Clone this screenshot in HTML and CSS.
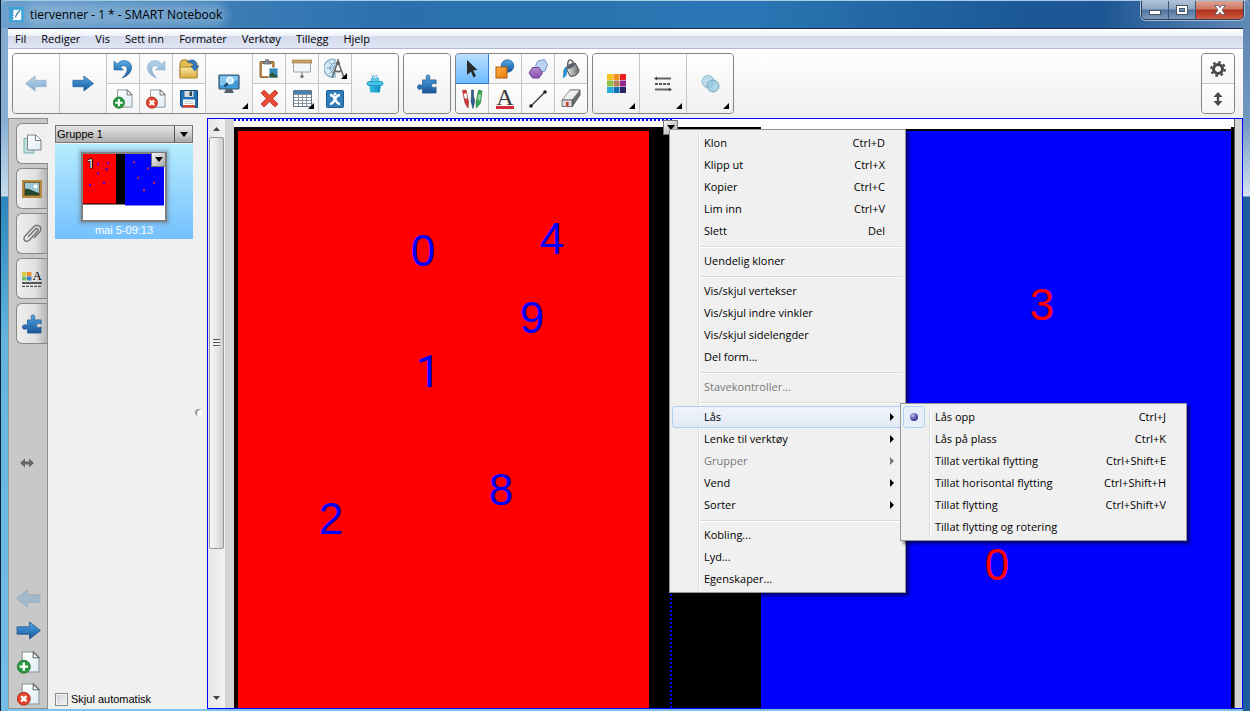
FILE: index.html
```html
<!DOCTYPE html>
<html lang="no">
<head>
<meta charset="utf-8">
<title>tiervenner - 1 * - SMART Notebook</title>
<link rel="stylesheet" href="styles.css">
</head>
<body>
<svg class="defs" aria-hidden="true">
  <defs>
    <linearGradient id="gBlue" x1="0" y1="0" x2="0" y2="1"><stop offset="0" stop-color="#5fa9e0"/><stop offset=".5" stop-color="#2f7fc2"/><stop offset="1" stop-color="#1c5596"/></linearGradient>
    <linearGradient id="gPale" x1="0" y1="0" x2="0" y2="1"><stop offset="0" stop-color="#b4d2ec"/><stop offset="1" stop-color="#86abce"/></linearGradient>
    <linearGradient id="gPage" x1="0" y1="0" x2="1" y2="1"><stop offset="0" stop-color="#fff"/><stop offset="1" stop-color="#dcecf5"/></linearGradient>
    <linearGradient id="gOrange" x1="0" y1="0" x2="1" y2="1"><stop offset="0" stop-color="#ffb13c"/><stop offset="1" stop-color="#ea7a10"/></linearGradient>
    <linearGradient id="gFolder" x1="0" y1="0" x2="0" y2="1"><stop offset="0" stop-color="#fbe9a6"/><stop offset="1" stop-color="#d9ab3e"/></linearGradient>
    <linearGradient id="gCyan" x1="0" y1="0" x2="1" y2="0"><stop offset="0" stop-color="#3cc0e8"/><stop offset="1" stop-color="#0d8dbf"/></linearGradient>
    <linearGradient id="gPurple" x1="0" y1="0" x2="0" y2="1"><stop offset="0" stop-color="#b58bd4"/><stop offset="1" stop-color="#8550ad"/></linearGradient>
    <linearGradient id="gMetal" x1="0" y1="0" x2="1" y2="0"><stop offset="0" stop-color="#f4f4f4"/><stop offset="1" stop-color="#6a6a6a"/></linearGradient>
  </defs>
  <symbol id="arrow" viewBox="0 0 24 18"><path d="M1 5.500h12V.8L23.500 9 13 17.200v-4.700H1z" stroke-width=".8"/></symbol>
  <symbol id="page" viewBox="0 0 22 22"><path d="M5 1h11l5 5v14H5z" fill="url(#gPage)" stroke="#8b9196"/><path d="M15.500 1v5.500H21z" fill="#fff" stroke="#5f666c"/></symbol>
  <symbol id="pageAdd" viewBox="0 0 22 22"><use href="#page"/><circle cx="6.500" cy="15" r="6.200" fill="#279a3f" stroke="#1a6e2c" stroke-width=".8"/><path d="M6.500 11v8M2.500 15h8" stroke="#fff" stroke-width="2.200"/></symbol>
  <symbol id="pageDel" viewBox="0 0 22 22"><use href="#page"/><circle cx="6.500" cy="15" r="6.200" fill="#e2432c" stroke="#a32718" stroke-width=".8"/><path d="M4 12.500l5 5m0-5l-5 5" stroke="#fff" stroke-width="2.400"/></symbol>
  <symbol id="puzzle" viewBox="0 0 22 22"><path d="M6 6.500h5C9.300 3.500 9.800 1 12 1s2.900 2.500 1.300 5.500H21V11c-2.500-1.600-5-.8-5 1.600s2.500 3.200 5 1.600V21H6v-5c-3 1.600-5.500 1-5.500-1.600S3 11.200 6 12.600z" fill="url(#gBlue)" stroke="#22578f" stroke-width=".8"/></symbol>
  <symbol id="undoArrow" viewBox="0 0 20 20"><path d="M1 2v9h9.500L7.600 8.200C12 3.500 19 10 9 19c13-4 12-17.500 2-17.500-3 0-5 1.500-6.500 3.500z"/></symbol>
  <symbol id="corner" viewBox="0 0 6 6"><path d="M6 0v6H0z"/></symbol>
  <symbol id="down" viewBox="0 0 8 5"><path d="M0 0h8L4 5z"/></symbol>
  <symbol id="right" viewBox="0 0 4 8"><path d="M0 0l4 4-4 4z"/></symbol>
</svg>

<div class="window">
  <header class="titlebar">
    <svg class="app-icon" viewBox="0 0 16 16"><rect width="16" height="16" rx="1" fill="#3ba2d8"/><path d="M4 3h9v11H4z" fill="#fff"/><path d="M3 4h2M3 6.500h2M3 9h2M3 11.500h2" stroke="#1677b4"/><path d="M7 11l1-3 4-5" stroke="#2a7ab0" stroke-width="1.300" fill="none"/></svg>
    <h1 class="title">tiervenner - 1 * - SMART Notebook</h1>
    <div class="controls">
      <button class="ctl" aria-label="Minimer"><svg viewBox="0 0 12 10" width="12" height="10"><rect x=".5" y="5.500" width="11" height="4" fill="#fff" stroke="#465466"/></svg></button>
      <button class="ctl" aria-label="Maksimer"><svg viewBox="0 0 12 10" width="12" height="10"><rect x=".5" y=".5" width="11" height="9" fill="#fff" stroke="#465466"/><rect x="3.500" y="3.500" width="5" height="3" fill="#7690ae" stroke="#465466"/></svg></button>
      <button class="ctl close" aria-label="Lukk"><svg viewBox="0 0 12 10" width="12" height="10"><path d="M.8.500h3.500L6 2.700 7.700.500h3.500L8 5l3.200 4.500H7.700L6 7.300 4.300 9.500H.8L4 5z" fill="#fff" stroke="#555b68" stroke-width=".8"/></svg></button>
    </div>
  </header>

  <div class="client">
    <nav class="menubar">
      <button>Fil</button><button>Rediger</button><button>Vis</button><button>Sett inn</button><button>Formater</button><button>Verktøy</button><button>Tillegg</button><button>Hjelp</button>
    </nav>

    <div class="toolbar">
      <div class="group main-group">
        <button class="tool tall" aria-label="Forrige side"><svg class="flip" width="22" height="17" viewBox="0 0 24 18"><use href="#arrow" fill="url(#gPale)" stroke="#8db0d0"/></svg></button>
        <button class="tool tall" aria-label="Neste side"><svg width="22" height="17" viewBox="0 0 24 18"><use href="#arrow" fill="url(#gBlue)" stroke="#23609e"/></svg></button>
        <button class="tool" aria-label="Angre"><svg width="20" height="20" viewBox="0 0 20 20"><use href="#undoArrow" fill="url(#gBlue)" stroke="#235f9c" stroke-width=".6"/></svg></button>
        <button class="tool" aria-label="Gjør om"><svg class="flip" width="20" height="20" viewBox="0 0 20 20"><use href="#undoArrow" fill="url(#gPale)" stroke="#90b4d2" stroke-width=".6"/></svg></button>
        <button class="tool" aria-label="Åpne fil"><svg width="21" height="20" viewBox="0 0 21 20"><path d="M1 4l2-3h5l2 3h8v14H1z" fill="#e4bd55" stroke="#9b7927"/><path d="M1 8h17v11H1z" fill="url(#gFolder)" stroke="#a98530"/><path d="M8 3c5-4 10-2 9.500 4H20l-4.200 5L12 7h2.500c0-3-3-4-6.500-4z" fill="#2f7fc2" stroke="#1c5596" stroke-width=".7"/></svg></button>
        <button class="tool tall" aria-label="Vis skjermer"><svg width="22" height="20" viewBox="0 0 22 20"><rect x="1" y="1" width="20" height="14" rx="1" fill="#3f9ad6" stroke="#3a5266" stroke-width="1.200"/><path d="M2 2h18v4L2 12z" fill="#7fc3ee"/><path d="M8 15h6l2 4H6z" fill="#56616b"/><circle cx="12" cy="6.500" r="3.200" fill="#c9e9fb" stroke="#fff" stroke-width="1.300"/><path d="M9.700 9l-3 3.500" stroke="#1d3f5e" stroke-width="2"/></svg><svg class="more" width="6" height="6"><use href="#corner"/></svg></button>
        <button class="tool" aria-label="Lim inn"><svg width="20" height="20" viewBox="0 0 20 20"><rect x="1" y="2.500" width="14" height="16" rx="1" fill="#b98d50" stroke="#866333"/><path d="M3 5h10v12H3z" fill="#fff"/><path d="M4.500 5V2.500h2V.8h3.200v1.700h2V5z" fill="#8b8f93" stroke="#55595d" stroke-width=".7"/><rect x="10" y="9" width="9" height="10" fill="#2f87b6" stroke="#eef3f5"/><path d="M10.500 18.500v-3l3-2 5 4v1z" fill="#2f5534"/></svg></button>
        <button class="tool" aria-label="Skjermskygge"><svg width="20" height="20" viewBox="0 0 20 20"><path d="M1.500 3h17v10h-17z" fill="#f1f5f8" stroke="#a1a6aa"/><path d="M0 1h20v3H0z" fill="#caa566" stroke="#8d6c35" stroke-width=".6"/><path d="M10 13v4" stroke="#777"/><circle cx="10" cy="17.500" r="1.700" fill="#777"/></svg></button>
        <button class="tool" aria-label="Måleverktøy"><svg width="22" height="21" viewBox="0 0 22 21"><path d="M11 1.500a9 9 0 1 0 0 17.500z" fill="#d8eaf4" stroke="#7aa9c7" stroke-width="1.200"/><path d="M11 5a5 5 0 0 0 0 10M2.500 10H11M5 4l5 5M5 16l5-5" fill="none" stroke="#6fa1c0"/><path d="M14 1v3M13.500 5L8 19.500M14.500 5l5.500 14.500M10.500 12.500c2.500 1.500 5 1.500 7.500 0" fill="none" stroke="#6a6a6a" stroke-width="1.600"/><circle cx="14" cy="5" r="1.900" fill="#5e5e5e"/></svg><svg class="more" width="6" height="6"><use href="#corner"/></svg></button>
        <button class="tool tall" aria-label="Tillegg"><svg width="18" height="20" viewBox="0 0 18 20"><path d="M3 10h12l-1.200 8.500H4.200z" fill="url(#gCyan)"/><rect x="1" y="7.500" width="16" height="4" rx="2" fill="#45c3e5" stroke="#168bb6" stroke-width=".8"/><path d="M5 7.500l1-4 3 1.500 3-1.500 1 4z" fill="#65cfec" stroke="#1b96c0" stroke-width=".7"/><path d="M8 .5v3M5.500 1.500L7 3M11 1L9.500 3" stroke="#47aecd"/></svg></button>
        <button class="tool" aria-label="Legg til side"><svg width="20" height="20"><use href="#pageAdd"/></svg></button>
        <button class="tool" aria-label="Slett side"><svg width="20" height="20"><use href="#pageDel"/></svg></button>
        <button class="tool" aria-label="Lagre"><svg width="18" height="18" viewBox="0 0 18 18"><path d="M.5.500h17v17h-15l-2-2z" fill="#2371b5" stroke="#164a7c"/><path d="M4.500 1h9v6h-9z" fill="#d6dde2"/><path d="M9.500 1.500h2.500v4.500H9.500z" fill="#34434e"/><path d="M3 9.500h12v8H3z" fill="#fff"/><path d="M3 15h12v2.500H3z" fill="#d9432e"/><path d="M4.500 11.500h9M4.500 13.500h9" stroke="#b4bcc2" stroke-width=".8"/></svg></button>
        <button class="tool" aria-label="Slett"><svg width="19" height="19" viewBox="0 0 19 19"><path d="M1 4l3-3 5.500 5.300L15 1l3 3-5.400 5.500L18 15l-3 3-5.500-5.300L4 18l-3-3 5.400-5.500z" fill="#ea4e38" stroke="#b52e1e" stroke-width=".8"/></svg></button>
        <button class="tool" aria-label="Tabell"><svg width="19" height="17" viewBox="0 0 19 17"><path d="M.5.500h18v16H.5z" fill="#fff" stroke="#667684"/><path d="M1 1h17v3H1z" fill="#4582b4"/><path d="M1 4.500h17M1 7.500h17M1 10.500h17M1 13.500h17M5.500 4v12M9.500 4v12M13.500 4v12" stroke="#8b98a2"/></svg><svg class="more" width="6" height="6"><use href="#corner"/></svg></button>
        <button class="tool" aria-label="SMART Exchange"><svg width="18" height="18" viewBox="0 0 18 18"><rect x=".5" y=".5" width="17" height="17" rx="1" fill="#2f7dbb" stroke="#1b5b93"/><path d="M4 5c3 0 4 2 5 4s2 5 5 5M14 5c-3 0-4 2-5 4s-2 5-5 5" stroke="#fff" stroke-width="2.400" fill="none"/><circle cx="9" cy="4" r="1.500" fill="#fff"/></svg></button>
      </div>
      <div class="group">
        <button class="tool tall" aria-label="Tilleggsverktøy"><svg width="20" height="20"><use href="#puzzle"/></svg></button>
      </div>
      <div class="group draw-group">
        <button class="tool active" aria-label="Merk"><svg width="12" height="18" viewBox="0 0 12 18"><path d="M1 0l10.500 10-4.300.500L10 16l-2.500 1.500L5 11.700l-4 3z" fill="#2b2b2b"/></svg></button>
        <button class="tool" aria-label="Former"><svg width="20" height="20" viewBox="0 0 20 20"><circle cx="12.500" cy="7" r="6.300" fill="url(#gBlue)" stroke="#2a65a0" stroke-width=".8"/><rect x="1" y="8" width="11" height="11" fill="url(#gOrange)" stroke="#a85c14"/></svg></button>
        <button class="tool" aria-label="Vanlige polygoner"><svg width="20" height="20" viewBox="0 0 20 20"><path d="M7.500 7l2.500-5 6.500-1.500 3 5-2.500 6.500-6 1z" fill="#bcd4f4" stroke="#7c96c8"/><path d="M4.500 8.500h6.500L14.500 14 11 19H4.500L1 14z" fill="url(#gPurple)" stroke="#6e4394"/></svg></button>
        <button class="tool" aria-label="Fyll"><svg width="18" height="20" viewBox="0 0 18 20"><path d="M6 8C5 3 7 0 9 1s3 3 2 7" fill="none" stroke="#444" stroke-width="1.200"/><path d="M4 9l9-5 4 7c-1 5-5 7-9 6z" fill="url(#gMetal)" stroke="#444"/><ellipse cx="8.500" cy="7" rx="5.500" ry="2.200" transform="rotate(-28 8.500 7)" fill="#5b6268"/><path d="M3.500 8c-4 4-1 6-3 11 4-1 5-4 4.500-9z" fill="#2e8fd0"/></svg></button>
        <button class="tool" aria-label="Penner"><svg width="21" height="20" viewBox="0 0 21 20"><path d="M.5 1.500l3.500-.5 2.500 12-.5 6-3-5z" fill="#d33a3a" stroke="#8e2222" stroke-width=".6"/><path d="M1.500 5l3-1 1 5-2.500 1z" fill="#f4f0ef"/><path d="M9.500 1h2v6l1.200 5-1.700 7.500L9 12l.5-5z" fill="#315f8e" stroke="#1d3e60" stroke-width=".6"/><path d="M16.500 1l3.500 1-1.500 12-4 5-.5-5z" fill="#36a852" stroke="#1b7434" stroke-width=".6"/><path d="M16.500 5l2.500.5-.8 6-2.700-.5z" fill="#8fd6a3"/></svg></button>
        <button class="tool" aria-label="Tekst"><span class="letter">A</span></button>
        <button class="tool" aria-label="Linjer"><svg width="18" height="18" viewBox="0 0 18 18"><path d="M2 16L16 2" stroke="#333" stroke-width="1.200"/><circle cx="2" cy="16" r="1.800" fill="#222"/><circle cx="16" cy="2" r="1.800" fill="#222"/></svg></button>
        <button class="tool" aria-label="Viskelær"><svg width="20" height="19" viewBox="0 0 20 19"><path d="M9 1h10v5l-8 12V11z" fill="#6c6c6c" stroke="#444" stroke-width=".8"/><path d="M9 1h10l-8 10H1z" fill="#efefef" stroke="#777" stroke-width=".8"/><path d="M1 11h10v6.500H1z" fill="#ddd" stroke="#555" stroke-width=".8"/><path d="M5 13h2.500v4H5z" fill="#d43b2d"/></svg></button>
      </div>
      <div class="group">
        <button class="tool tall" aria-label="Farge"><svg width="19" height="19" viewBox="0 0 19 19"><path fill="#f6c321" d="M0 0h6v6H0z"/><path fill="#f5921e" d="M6.500 0h6v6h-6z"/><path fill="#ec2024" d="M13 0h6v6h-6z"/><path fill="#8cc044" d="M0 6.500h6v6H0z"/><path fill="#b38154" d="M6.500 6.500h6v6h-6z"/><path fill="#91288e" d="M13 6.500h6v6h-6z"/><path fill="#29abe1" d="M0 13h6v6H0z"/><path fill="#0a72bb" d="M6.500 13h6v6h-6z"/><path fill="#292563" d="M13 13h6v6h-6z"/></svg><svg class="more" width="6" height="6"><use href="#corner"/></svg></button>
        <button class="tool tall" aria-label="Linjestil"><svg width="18" height="16" viewBox="0 0 18 16"><path d="M2 2.500h15M1 13.500h15" stroke="#666" stroke-width="2"/><path d="M0 2.500L3 .5v4zM18 13.500l-3-2v4z" fill="#444"/><path d="M1 8h16" stroke="#555" stroke-width="2" stroke-dasharray="3 1"/></svg><svg class="more" width="6" height="6"><use href="#corner"/></svg></button>
        <button class="tool tall" aria-label="Gjennomsiktighet"><svg width="19" height="18" viewBox="0 0 19 18"><circle cx="7" cy="6.500" r="6" fill="#a9d4e8" fill-opacity=".75" stroke="#8ab6ca"/><circle cx="12" cy="11" r="6" fill="#8cc5e0" fill-opacity=".7" stroke="#77a9c0"/></svg><svg class="more" width="6" height="6"><use href="#corner"/></svg></button>
      </div>
      <div class="group settings-group">
        <button class="tool" aria-label="Innstillinger"><svg width="16" height="16" viewBox="0 0 16 16"><circle cx="8" cy="8" r="4.500" fill="none" stroke="#484848" stroke-width="3"/><circle cx="8" cy="8" r="6.800" fill="none" stroke="#484848" stroke-width="2.200" stroke-dasharray="2.600 2.740"/></svg></button>
        <button class="tool" aria-label="Flytt verktøylinje"><svg width="10" height="14" viewBox="0 0 10 14"><path d="M5 0l4.500 5H6.200v4h3.300L5 14 .5 9h3.300V5H.5z" fill="#484848"/></svg></button>
      </div>
    </div>

    <div class="body">
      <aside class="tabs">
        <button class="tab current" aria-label="Sidesorterer"><svg width="20" height="20" viewBox="0 0 20 20"><path d="M1 4.500h10V19H1z" fill="#c2e2e2" stroke="#74acae"/><path d="M4.500 1H13l5 5v10H4.500z" fill="url(#gPage)" stroke="#788388"/><path d="M12.500 1v5.500H18" fill="#fff" stroke="#788388"/></svg></button>
        <button class="tab" aria-label="Galleri"><svg width="20" height="18" viewBox="0 0 20 18"><rect x="1" y="1" width="18" height="16" fill="#9cc9d8" stroke="#b48a3e" stroke-width="2"/><rect x="2.500" y="2.500" width="15" height="13" fill="none" stroke="#7c6230"/><path d="M3 9c4-1 7 2 14 4v2H3z" fill="#23472f"/><circle cx="13.500" cy="6.500" r="2" fill="#fff"/></svg></button>
        <button class="tab" aria-label="Vedlegg"><svg width="20" height="20" viewBox="0 0 20 20"><path d="M6 13l7-7.500c2-2 4 0 2.300 2L8 15.500c-4 4-8 0-5-3.500l8.500-9c4-4 9.500 0 6.500 4.500L12 14" fill="none" stroke="#777" stroke-width="1.500"/></svg></button>
        <button class="tab" aria-label="Egenskaper"><span class="props"><svg width="20" height="16" viewBox="0 0 20 16"><path fill="#d8cb45" d="M0 1h4.500v4H0z"/><path fill="#ee8b2c" d="M5 1h4.500v4H5z"/><path fill="#77bd63" d="M0 5.500h4.500v4H0z"/><path fill="#3f7bc0" d="M5 5.500h4.500v4H5z"/><path d="M0 12h20" stroke="#333" stroke-width="1.600"/><path d="M0 15.300h20" stroke="#333" stroke-dasharray="3 1"/></svg><span class="small-letter">A</span></span></button>
        <button class="tab" aria-label="Tillegg"><svg width="20" height="20"><use href="#puzzle"/></svg></button>
        <div class="side-tools">
          <button class="side" aria-label="Flytt sidefelt"><svg class="resize" width="14" height="10" viewBox="0 0 14 10"><path d="M0 5l5-4.500v3h4v-3L14 5 9 9.500v-3H5v3z" fill="#666"/></svg></button>
          <button class="side" aria-label="Forrige side"><svg class="flip" width="25" height="19"><use href="#arrow" fill="#a3b8c9" stroke="#92aabd"/></svg></button>
          <button class="side" aria-label="Neste side"><svg width="25" height="19"><use href="#arrow" fill="url(#gBlue)" stroke="#24598f"/></svg></button>
          <button class="side" aria-label="Legg til side"><svg width="23" height="23"><use href="#pageAdd"/></svg></button>
          <button class="side" aria-label="Slett side"><svg width="23" height="23"><use href="#pageDel"/></svg></button>
        </div>
      </aside>

      <section class="sorter">
        <div class="group-select">
          <select aria-label="Gruppe"><option>Gruppe 1</option></select>
          <span class="drop"><svg width="8" height="5"><use href="#down"/></svg></span>
        </div>
        <div class="page-item">
          <div class="thumb">
            <svg viewBox="0 0 82 64" width="82" height="66" preserveAspectRatio="none"><path fill="#fff" d="M0 0h82v64H0z"/><path d="M0 0h42v49H0z"/><path fill="#f00" d="M0 0h33v48H0z"/><path fill="#00f" d="M42 0h39v50H42z"/><path d="M14 9h2v2h-2zM24 8h2v2h-2zM22 14h3v2h-3zM14 18h2v2h-2zM20 27h2v2h-2zM6 29h2v2H6z" fill="#50c"/><path d="M50 7h2v2h-2zM64 13h2v2h-2zM54 22h2v2h-2zM70 27h2v2h-2zM60 34h2v2h-2z" fill="#c0205a"/></svg>
            <span class="thumb-no">1</span>
            <button class="handle thumb-handle" aria-label="Sidemeny"><svg width="8" height="5"><use href="#down"/></svg></button>
          </div>
          <span class="stamp">mai 5-09:13</span>
        </div>
        <span class="grip"></span>
        <label class="autohide"><input type="checkbox">Skjul automatisk</label>
      </section>

      <main class="workspace">
        <div class="scrollbar">
          <svg width="7" height="4" viewBox="0 0 7 4"><path d="M0 4h7L3.500 0z" fill="#444"/></svg>
          <div class="track"><div class="thumbbar"><span class="lines"></span></div></div>
          <svg width="7" height="4" viewBox="0 0 7 4"><path d="M0 0h7L3.500 4z" fill="#444"/></svg>
        </div>
        <div class="stage">
          <div class="board">
            <div class="red"></div>
            <div class="gap"></div>
            <div class="blue"></div>
          </div>
          <div class="selection"></div>
          <span class="num n0">0</span><span class="num n4">4</span><span class="num n9">9</span><span class="num n1">1</span><span class="num n8">8</span><span class="num n2">2</span>
          <span class="num warm n3">3</span><span class="num warm n00">0</span>
          <button class="handle object-handle" aria-label="Objektmeny"><svg width="8" height="5"><use href="#down"/></svg></button>

          <div class="menu context" role="menu">
            <button class="item"><span>Klon</span><span>Ctrl+D</span></button>
            <button class="item"><span>Klipp ut</span><span>Ctrl+X</span></button>
            <button class="item"><span>Kopier</span><span>Ctrl+C</span></button>
            <button class="item"><span>Lim inn</span><span>Ctrl+V</span></button>
            <button class="item"><span>Slett</span><span>Del</span></button>
            <div class="sep"></div>
            <button class="item">Uendelig kloner</button>
            <div class="sep"></div>
            <button class="item">Vis/skjul vertekser</button>
            <button class="item">Vis/skjul indre vinkler</button>
            <button class="item">Vis/skjul sidelengder</button>
            <button class="item">Del form...</button>
            <div class="sep"></div>
            <button class="item" disabled>Stavekontroller...</button>
            <div class="sep"></div>
            <button class="item sub hot"><span>Lås</span><svg width="4" height="8"><use href="#right"/></svg></button>
            <button class="item sub"><span>Lenke til verktøy</span><svg width="4" height="8"><use href="#right"/></svg></button>
            <button class="item sub" disabled><span>Grupper</span><svg width="4" height="8"><use href="#right"/></svg></button>
            <button class="item sub"><span>Vend</span><svg width="4" height="8"><use href="#right"/></svg></button>
            <button class="item sub"><span>Sorter</span><svg width="4" height="8"><use href="#right"/></svg></button>
            <div class="sep"></div>
            <button class="item">Kobling...</button>
            <button class="item">Lyd...</button>
            <button class="item">Egenskaper...</button>
          </div>

          <div class="menu submenu" role="menu">
            <span class="mark"><span class="dot"></span></span>
            <button class="item"><span>Lås opp</span><span>Ctrl+J</span></button>
            <button class="item"><span>Lås på plass</span><span>Ctrl+K</span></button>
            <button class="item"><span>Tillat vertikal flytting</span><span>Ctrl+Shift+E</span></button>
            <button class="item"><span>Tillat horisontal flytting</span><span>Ctrl+Shift+H</span></button>
            <button class="item"><span>Tillat flytting</span><span>Ctrl+Shift+V</span></button>
            <button class="item">Tillat flytting og rotering</button>
          </div>
        </div>
      </main>
    </div>
  </div>
</div>
</body>
</html>
```

FILE: styles.css
```css
* { box-sizing: border-box; }

body {
  margin: 0;
  font-family: "Open Sans", "Noto Sans", sans-serif;
  font-size: 11px;
  line-height: 16px;
  color: #000;
}

button {
  margin: 0;
  padding: 0;
  border: 0;
  background: none;
  font: inherit;
  color: inherit;
}

svg { display: block; }
.defs { position: absolute; width: 0; height: 0; }
.flip { transform: scaleX(-1); }

/* Window frame */
.window {
  display: flex;
  flex-direction: column;
  height: 100vh;
  padding: 0 7px 2px 7px;
  overflow: hidden;
  border-left: 1px solid #0b2038;
  background:
    linear-gradient(#84abd0 0, #86aed4 120px, #c5dcee 196px, #2b86bc 197px, #63b5de 340px, #74bde6 100%) left / 7px 100% no-repeat,
    linear-gradient(#5d84b0 0, #6f97c0 120px, #d3e2ef 196px, #1f5c9c 197px, #1f5c9c 100%) right / 7px 100% no-repeat,
    #7cc4ee;
}

.titlebar {
  display: flex;
  align-items: center;
  gap: 6px;
  flex: none;
  height: 28px;
  margin: 0 -7px;
  padding: 0 6px 0 8px;
  border-top: 1px solid #a9cbe6;
  border-radius: 6px 6px 0 0;
  background: linear-gradient(90deg, #6da0cc 0, #3b7cb6 240px, #2a70ae 400px, #2a76b4 60%, #1c5896 82%, #1d5694 88%, #5f88b4 100%);
}

.app-icon { width: 15px; height: 15px; }

.title {
  margin: 0;
  font-size: 12px;
  font-weight: 400;
  line-height: 14px;
  border-radius: 7px;
  background: rgba(170, 202, 228, .4);
  box-shadow: 0 0 8px 5px rgba(170, 202, 228, .4);
}

.controls {
  display: flex;
  align-self: flex-start;
  margin-left: auto;
  border: 1px solid #2b3f5a;
  border-top: 0;
  border-radius: 0 0 5px 5px;
  box-shadow: 0 0 0 1px #a9bfd6;
  overflow: hidden;
}

.ctl {
  display: grid;
  place-items: center;
  width: 27px;
  height: 18px;
  border-right: 1px solid #3c5574;
  background: linear-gradient(#b0c3d8 0, #8ba5c3 45%, #4f729c 50%, #7c9bbd 100%);
}

.close {
  width: 47px;
  border-right: 0;
  background: linear-gradient(#dea394 0, #cd7562 45%, #ae2f1a 50%, #cf5a42 100%);
}

.client {
  display: flex;
  flex-direction: column;
  flex: 1;
  min-height: 0;
  border-top: 1px solid #1b2c44;
  background: #f0f0f0;
}

.menubar {
  display: flex;
  gap: 15px;
  flex: none;
  height: 20px;
  padding-left: 7px;
  border-bottom: 1px solid #b4b9d0;
  background: linear-gradient(#fff 0, #eef1f8 35%, #d4daec 40%, #e1e6f5 100%);
}

/* Toolbar */
.toolbar {
  display: flex;
  align-items: flex-start;
  gap: 4px;
  flex: none;
  height: 69px;
  padding: 4px 8px 0 4px;
  background: linear-gradient(#fff, #efefef);
}

.group {
  display: grid;
  grid-auto-flow: column;
  grid-template-rows: 29px 29px;
  gap: 1px;
  border: 1px solid #848484;
  border-radius: 4px;
  overflow: hidden;
  background: #c6c6c6;
}

.main-group {
  grid-auto-flow: row;
  grid-template-columns: 46px 46px 32px 32px 32px 46px 32px 32px 32px 46px;
}

.draw-group { grid-auto-flow: row; grid-template-columns: repeat(4, 32px); }
.settings-group { margin-left: auto; grid-template-columns: 32px; }

.tool {
  position: relative;
  display: grid;
  place-items: center;
  width: 32px;
  background: linear-gradient(#fdfdfd, #f5f5f5);
}

.tall { grid-row: span 2; width: 46px; background: linear-gradient(#fefefe, #f0f0f0); }
.active { background: linear-gradient(#b9e0ff, #6fbbff); box-shadow: 0 0 0 1px #2f7fd6; z-index: 1; }
.more { position: absolute; right: 4px; bottom: 4px; }

.letter {
  font-family: "Liberation Serif", serif;
  font-size: 24px;
  line-height: 18px;
  color: #3a3a3a;
  border-bottom: 3px solid #d8283c;
}

/* Body */
.body { display: flex; flex: 1; min-height: 0; }

.tabs {
  display: flex;
  flex-direction: column;
  align-items: flex-end;
  gap: 4px;
  flex: none;
  width: 40px;
  padding: 4px 0 2px;
  border: 1px solid #8e8e8e;
  border-left-color: #999;
  background: #c8c8c8;
}

.tab {
  display: grid;
  place-items: center;
  flex: none;
  width: 31px;
  height: 41px;
  border: 1px solid #888;
  border-right: 0;
  border-radius: 6px 0 0 6px;
  background: linear-gradient(90deg, #eee 0, #e2e2e2 60%, #b5b5b5 100%);
}

.current { width: 32px; margin-right: -1px; background: #f0f0f0; }

.props { position: relative; }
.small-letter {
  position: absolute;
  right: 0;
  top: -3px;
  font-family: "Liberation Serif", serif;
  font-size: 13px;
}

.side-tools {
  display: grid;
  gap: 8px;
  justify-items: center;
  width: 38px;
  margin-top: auto;
}

.side { display: grid; place-items: center; height: 24px; }
.resize { margin-right: 2px; }
.side:first-child { margin-bottom: 103px; }

.sorter {
  position: relative;
  display: flex;
  flex-direction: column;
  flex: none;
  width: 159px;
  padding: 7px 14px 2px 7px;
  font-family: "Liberation Sans", Arial, sans-serif;
  background: #f0f0f0;
}

.group-select {
  display: flex;
  flex: none;
  height: 18px;
  border: 1px solid #777;
}

.group-select select {
  flex: 1;
  min-width: 0;
  padding: 0 1px;
  border: 0;
  border-radius: 0;
  appearance: none;
  font: inherit;
  background: linear-gradient(#e6e6e6, #b0b0b0);
}

.drop {
  display: grid;
  place-items: center;
  width: 18px;
  border-left: 1px solid #555;
  background: linear-gradient(#eee, #aaa);
}

.page-item {
  display: flex;
  flex-direction: column;
  align-items: center;
  margin-top: 1px;
  padding-top: 8px;
  background: linear-gradient(#b6ecfe, #74c0fe);
}

.thumb {
  position: relative;
  border: 2px solid #808080;
  box-shadow: 0 0 3px 2px rgba(100, 130, 150, .5);
}

.thumb-no {
  position: absolute;
  left: 4px;
  top: 2px;
  color: #fff;
  font-family: Roboto, sans-serif;
  font-size: 13px;
  text-shadow: 1px 0 #000, -1px 0 #000, 0 1px #000, 0 -1px #000;
}

.handle {
  position: absolute;
  display: grid;
  place-items: center;
  width: 15px;
  height: 15px;
  border: 1px solid #777;
  background: linear-gradient(135deg, #f6f6f6, #a8a8a8);
}

.thumb-handle { right: -1px; top: -2px; }

.stamp { line-height: 17px; color: #fff; }

.grip {
  position: absolute;
  right: 5px;
  top: 291px;
  width: 7px;
  height: 7px;
  border-radius: 50%;
  background: #fff;
  box-shadow: inset 2px 1px 0 #999;
}

.autohide { display: flex; align-items: center; gap: 3px; margin-top: auto; }

.autohide input {
  appearance: none;
  width: 13px;
  height: 13px;
  margin: 0;
  border: 1px solid #8a8a8a;
  background: linear-gradient(135deg, #c8ccd2, #f6f6f6);
  box-shadow: inset 0 0 0 1px #f4f4f4;
}

/* Workspace */
.workspace {
  display: flex;
  flex: 1;
  min-width: 0;
  padding-right: 7px;
  border: 1px solid #00f;
  background: #d4d4d4;
}

.scrollbar {
  display: flex;
  flex-direction: column;
  align-items: center;
  flex: none;
  width: 17px;
  margin-right: 9px;
  padding: 8px 0;
  background: linear-gradient(90deg, #e6e6e6, #f4f4f4);
}

.track { flex: 1; align-self: stretch; padding: 6px 1px; }

.thumbbar {
  display: grid;
  place-items: center;
  height: 74.500%;
  border: 1px solid #989898;
  border-radius: 2px;
  background: linear-gradient(90deg, #f6f6f6 0, #eaeaea 45%, #cfcfd2 100%);
}

.lines {
  width: 7px;
  height: 8px;
  background: repeating-linear-gradient(#555 0, #555 1px, #f4f4f4 1px, #f4f4f4 3px);
}

.stage {
  position: relative;
  display: flex;
  flex: 1;
  min-width: 0;
  padding-top: 8px;
  border-right: 1px solid #555;
  background: #fff;
}

.board {
  display: grid;
  grid-template-columns: 415fr 112fr 473fr;
  flex: 1;
  background: #000;
}

.red { border-top: 4px solid #100; border-left: 4px solid #100; background: #f00; }
.blue { border-right: 3px solid #000; background: linear-gradient(#fff 2px, #000 2px, #000 4px, #00f 4px); }

.selection {
  position: absolute;
  left: 0;
  top: 0;
  width: 438px;
  bottom: 0;
  border-top: 2px dotted #00f;
  border-right: 2px dotted #00f;
}

.num {
  position: absolute;
  width: 26px;
  font-family: "Liberation Sans", Arial, sans-serif;
  font-size: 44px;
  line-height: 50px;
  text-align: center;
  color: #00f;
}

.warm { color: #f00; }
.n0 { left: 176px; top: 107px; }
.n4 { left: 305px; top: 95px; }
.n9 { left: 285px; top: 174px; }
.n1 { left: 181px; top: 228px; font-family: Roboto, sans-serif; }
.n8 { left: 254px; top: 346px; }
.n2 { left: 84px; top: 375px; }
.n3 { left: 795px; top: 161px; }
.n00 { left: 750px; top: 421px; }

.object-handle { left: 429px; top: 1px; }

/* Menus */
.menu {
  position: absolute;
  padding: 2px;
  border: 1px solid #979797;
  background: linear-gradient(90deg, transparent 26px, #dcdcdc 26px, #dcdcdc 27px, #fff 27px, #fff 28px, transparent 28px) content-box, #f0f0f0;
  box-shadow: 3px 3px 3px rgba(0, 0, 0, .5);
}

.context { left: 435px; top: 10px; width: 237px; }
.submenu { left: 666px; top: 284px; width: 287px; }

.item {
  display: flex;
  align-items: center;
  justify-content: space-between;
  width: 100%;
  height: 22px;
  padding: 0 17px 0 31px;
  border: 1px solid transparent;
  border-radius: 3px;
  text-align: left;
}

.item:disabled { color: #777; }
.sub { padding-right: 8px; }
.sub svg { fill: currentColor; }
.hot { border-color: #aecff7; background: linear-gradient(rgba(240, 245, 252, .8), rgba(222, 232, 248, .8)); }

.sep {
  height: 2px;
  margin: 4px 0 2px 28px;
  border-top: 1px solid #dcdcdc;
  border-bottom: 1px solid #fff;
}

.mark {
  position: absolute;
  left: 2px;
  top: 2px;
  display: grid;
  place-items: center;
  width: 22px;
  height: 22px;
  border: 1px solid #aecff7;
  border-radius: 3px;
  background: #e9eff8;
}

.dot {
  width: 8px;
  height: 8px;
  border-radius: 50%;
  background: radial-gradient(circle at 35% 30%, #b9b9ee, #32328a 70%);
}
```
